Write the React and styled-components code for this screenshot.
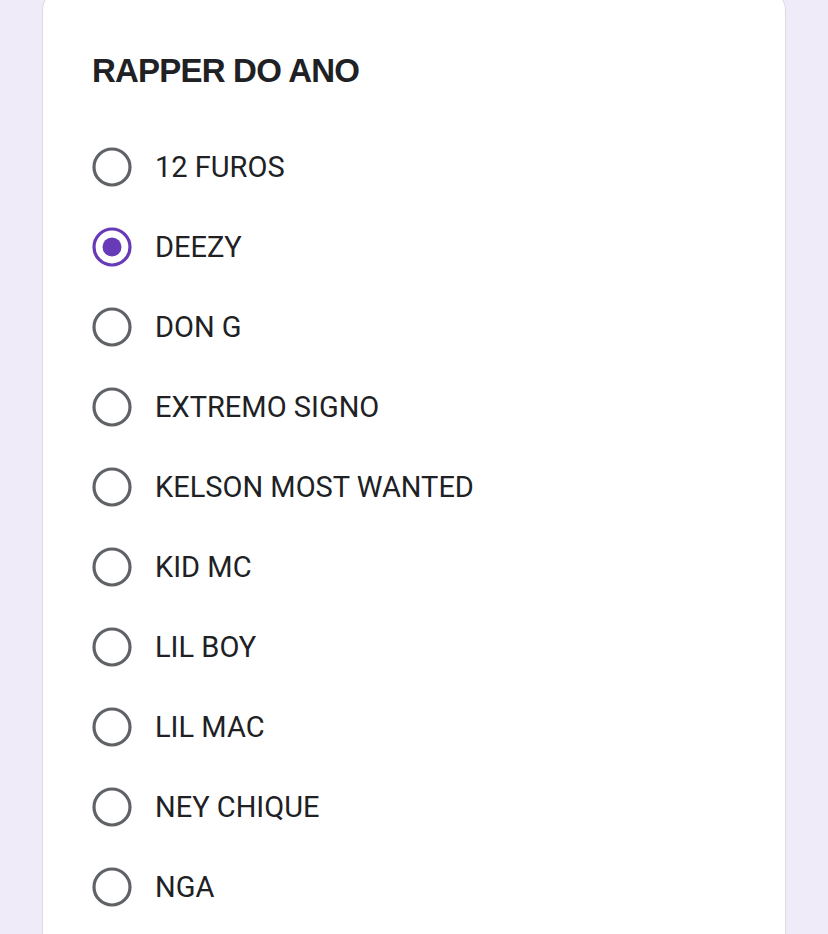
import React, { useState } from 'react';
import styled, { createGlobalStyle } from 'styled-components';

const GlobalStyle = createGlobalStyle`
  html, body {
    margin: 0;
    padding: 0;
    background: #efebf8;
  }
  body {
    font-family: Roboto, "Liberation Sans", Arial, sans-serif;
    overflow: hidden;
  }
`;

const Page = styled.div`
  height: 934px;
  padding-left: 42px;
  padding-right: 42px;
  overflow: hidden;
`;

const Card = styled.div`
  margin-top: -10px;
  background: #fff;
  border: 1px solid #dadce0;
  border-radius: 20px;
  padding: 60px 49px 40px;
  min-height: 1000px;
`;

const Title = styled.h2`
  margin: 0;
  font-family: "Liberation Sans", Arial, sans-serif;
  font-weight: 700;
  font-size: 33px;
  line-height: 40px;
  letter-spacing: -0.8px;
  color: #202124;
`;

const List = styled.div`
  margin-top: 36px;
  display: flex;
  flex-direction: column;
`;

const Option = styled.label`
  display: flex;
  align-items: center;
  gap: 23px;
  height: 80px;
  cursor: pointer;
`;

const Label = styled.span`
  font-size: 29px;
  line-height: 36px;
  color: #202124;
`;

const Radio = ({ checked }) => (
  <svg width="40" height="40" viewBox="0 0 40 40">
    <circle
      cx="20"
      cy="20"
      r="18"
      fill="none"
      stroke={checked ? '#673ab7' : '#5f6368'}
      strokeWidth="3.2"
    />
    {checked && <circle cx="20" cy="20" r="9.5" fill="#673ab7" />}
  </svg>
);

const options = [
  '12 FUROS',
  'DEEZY',
  'DON G',
  'EXTREMO SIGNO',
  'KELSON MOST WANTED',
  'KID MC',
  'LIL BOY',
  'LIL MAC',
  'NEY CHIQUE',
  'NGA',
];

export default function App() {
  const [selected, setSelected] = useState('DEEZY');
  return (
    <>
      <GlobalStyle />
      <Page>
        <Card>
          <Title>RAPPER DO ANO</Title>
          <List>
            {options.map((o) => (
              <Option key={o} onClick={() => setSelected(o)}>
                <Radio checked={selected === o} />
                <Label>{o}</Label>
              </Option>
            ))}
          </List>
        </Card>
      </Page>
    </>
  );
}
